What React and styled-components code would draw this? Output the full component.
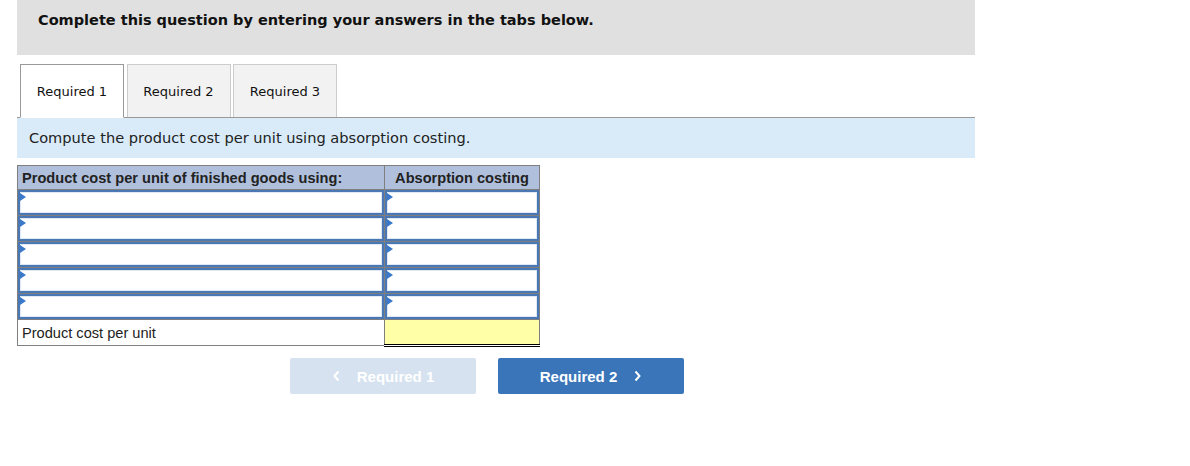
import React from "react";
import styled, { createGlobalStyle } from "styled-components";

const Global = createGlobalStyle`
  html, body { margin: 0; padding: 0; background: #fff; }
  body { font-family: "DejaVu Sans", Verdana, sans-serif; color: #000; }
`;

const Page = styled.div`
  width: 958px;
  padding-left: 17px;
`;

const Banner = styled.div`
  background: #e0e0e0;
  height: 55px;
  padding: 12px 0 0 21px;
  box-sizing: border-box;
  font-weight: bold;
  font-size: 14.5px;
  color: #111;
`;

const Tabs = styled.div`
  display: flex;
  gap: 2.5px;
  margin-top: 9px;
  padding-left: 3px;
  border-bottom: 1px solid #999;
  height: 53px;
  align-items: stretch;
`;

const Tab = styled.div`
  width: 104px;
  box-sizing: border-box;
  display: flex;
  align-items: center;
  justify-content: center;
  font-size: 13px;
  color: #111;
  background: ${(p) => (p.$active ? "#fff" : "#f2f2f2")};
  border: 1px solid ${(p) => (p.$active ? "#999" : "#ccc")};
  border-bottom: ${(p) => (p.$active ? "1px solid #fff" : "none")};
  margin-bottom: ${(p) => (p.$active ? "-1px" : "0")};
  padding-top: 1px;
`;

const Instruction = styled.div`
  background: #d9ebf9;
  height: 40px;
  box-sizing: border-box;
  padding: 11px 0 0 12px;
  font-size: 14.6px;
  color: #222;
`;

const Table = styled.table`
  margin-top: 7px;
  border-collapse: collapse;
  font-family: "Liberation Sans", Arial, sans-serif;
  font-size: 14.6px;
  border: 1px solid #7f7f7f;
`;

const HeadCell = styled.th`
  background: #b0c0dc;
  border: 1px solid #7f7f7f;
  height: 24px;
  padding: 0 4px;
  font-weight: bold;
  text-align: ${(p) => p.$align || "left"};
  color: #222;
  width: ${(p) => p.$w}px;
  box-sizing: border-box;
`;

const Cell = styled.td`
  border: 1px solid #7f7f7f;
  padding: 0;
  height: ${(p) => (p.$tall ? 26 : 25)}px;
  box-sizing: border-box;
  position: relative;
  background: ${(p) => (p.$yellow ? "#ffffa8" : "#fff")};
  ${(p) => (p.$double ? "border-bottom: 3px double #000;" : "")}
`;

const InputBox = styled.div`
  position: relative;
  height: 25px;
  box-sizing: border-box;
  border: 2px solid #4a78b5;
  box-shadow: inset 0 0 0 1px #dfe8f5;
  background: #fff;
`;

const Marker = styled.span`
  position: absolute;
  left: 0;
  top: 1px;
  width: 0;
  height: 0;
  border-top: 4px solid transparent;
  border-bottom: 4px solid transparent;
  border-left: 6px solid #3a78c9;
`;

const LabelCell = styled(Cell)`
  padding: 0 4px;
  color: #222;
`;

const Nav = styled.div`
  display: flex;
  gap: 22px;
  margin-top: 11px;
  margin-left: 273px;
`;

const NavButton = styled.div`
  width: 186px;
  height: 36px;
  border-radius: 2px;
  display: flex;
  align-items: center;
  justify-content: center;
  gap: 16px;
  font-family: "Liberation Sans", Arial, sans-serif;
  font-weight: bold;
  font-size: 15px;
  color: #fff;
  background: ${(p) => (p.$disabled ? "#d6e2f0" : "#3a75b9")};
`;

const Chevron = ({ dir }) => (
  <svg width="9" height="12" viewBox="0 0 9 12">
    <path
      d={dir === "left" ? "M6.5 1.5 L2.5 6 L6.5 10.5" : "M2.5 1.5 L6.5 6 L2.5 10.5"}
      fill="none"
      stroke="#fff"
      strokeWidth="2"
    />
  </svg>
);

const InputCell = () => (
  <Cell>
    <InputBox>
      <Marker />
    </InputBox>
  </Cell>
);

export default function App() {
  return (
    <>
      <Global />
      <Page>
        <Banner>Complete this question by entering your answers in the tabs below.</Banner>
        <Tabs>
          <Tab $active>Required 1</Tab>
          <Tab>Required 2</Tab>
          <Tab>Required 3</Tab>
        </Tabs>
        <Instruction>Compute the product cost per unit using absorption costing.</Instruction>
        <Table>
          <thead>
            <tr>
              <HeadCell $w={367}>Product cost per unit of finished goods using:</HeadCell>
              <HeadCell $w={155} $align="center">Absorption costing</HeadCell>
            </tr>
          </thead>
          <tbody>
            {[0, 1, 2, 3, 4].map((i) => (
              <tr key={i}>
                <InputCell />
                <InputCell />
              </tr>
            ))}
            <tr>
              <LabelCell $tall>Product cost per unit</LabelCell>
              <Cell $tall $yellow $double />
            </tr>
          </tbody>
        </Table>
        <Nav>
          <NavButton $disabled>
            <Chevron dir="left" />
            <span>Required 1</span>
          </NavButton>
          <NavButton>
            <span>Required 2</span>
            <Chevron dir="right" />
          </NavButton>
        </Nav>
      </Page>
    </>
  );
}
